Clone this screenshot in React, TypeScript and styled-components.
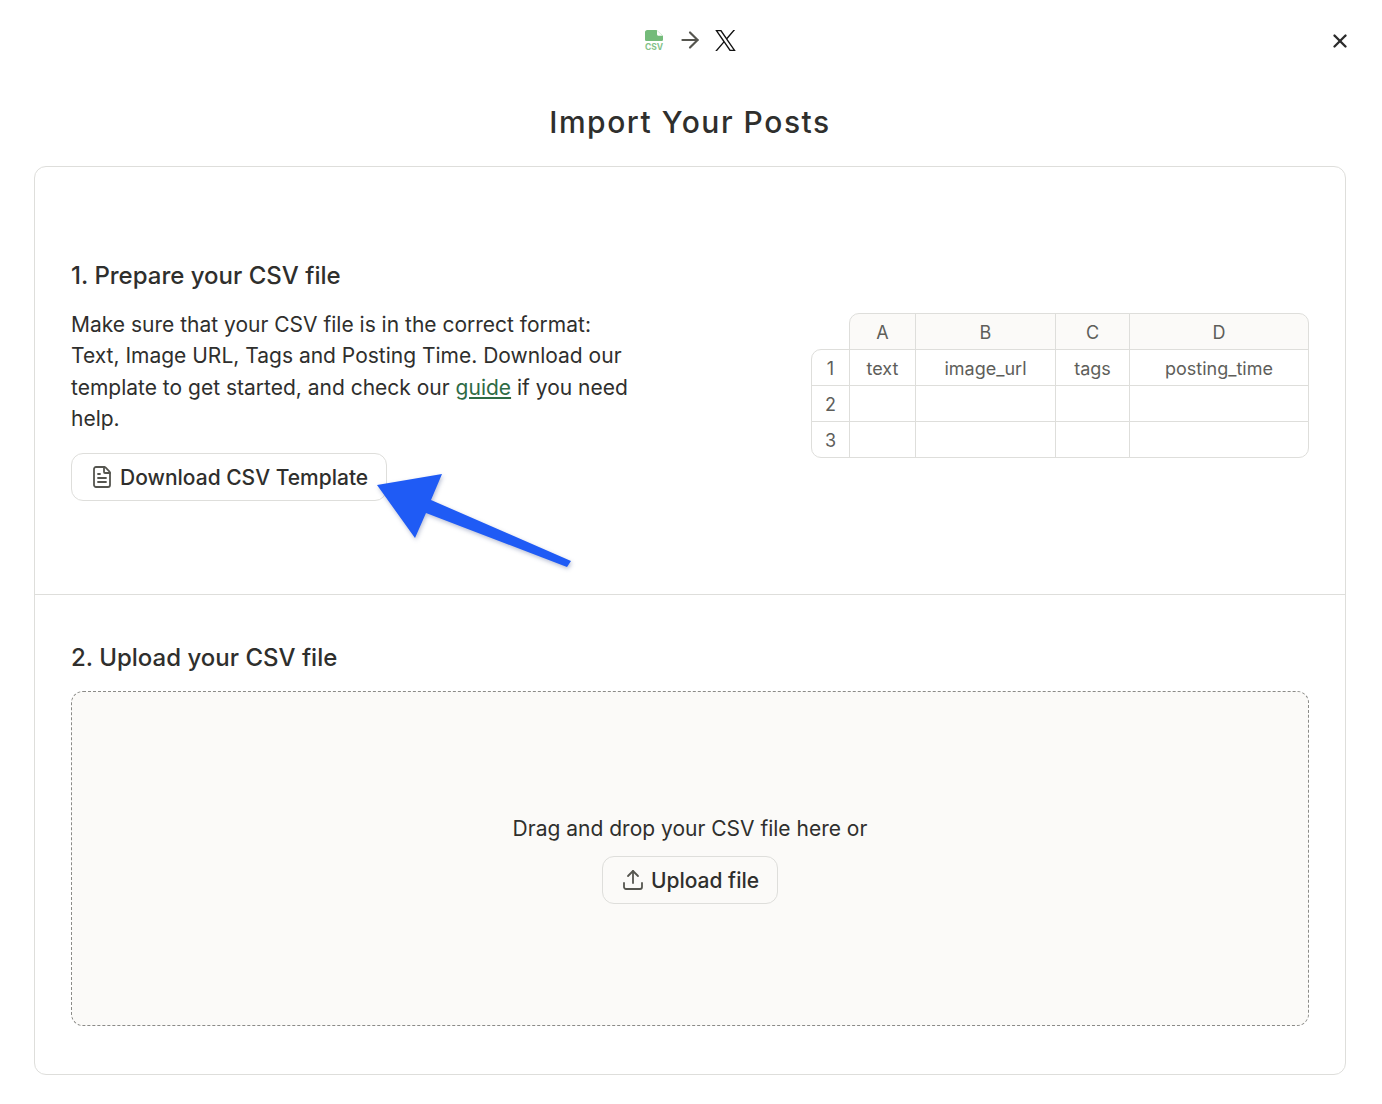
import React from 'react';
import styled, { createGlobalStyle } from 'styled-components';
import { FileText, Upload, ArrowRight, X } from 'lucide-react';

const GlobalStyle = createGlobalStyle`
  html, body {
    margin: 0;
    padding: 0;
    background: #fff;
  }
  body {
    font-family: Inter, "Liberation Sans", sans-serif;
    color: #2f2f2d;
  }
`;

const Page = styled.div`
  position: relative;
  width: 1382px;
  height: 1104px;
  padding: 0 36px 0 34px;
  box-sizing: border-box;
`;

const TopBar = styled.div`
  height: 80px;
  display: flex;
  align-items: center;
  justify-content: center;
  gap: 12.5px;
`;

const CloseButton = styled.button`
  position: absolute;
  top: 29px;
  right: 30px;
  width: 24px;
  height: 24px;
  padding: 0;
  border: 0;
  background: none;
  color: #2b2b2b;
  display: flex;
  align-items: center;
  justify-content: center;
`;

const Title = styled.h1`
  margin: 0;
  height: 86px;
  font-size: 30px;
  line-height: 85px;
  font-weight: 500;
  letter-spacing: 1.55px;
  text-align: center;
  color: #2f2f2d;
`;

const Card = styled.div`
  position: relative;
  height: 909px;
  border: 1px solid #dededb;
  border-radius: 12px;
  box-sizing: border-box;
  display: flex;
  flex-direction: column;
`;

const PrepareSection = styled.section`
  height: 428px;
  box-sizing: border-box;
  padding: 93px 36px 0;
  border-bottom: 1px solid #dededb;
  display: flex;
  justify-content: space-between;
  align-items: flex-start;
`;

const UploadSection = styled.section`
  flex: 1;
  padding: 47px 36px 48px;
  display: flex;
  flex-direction: column;
`;

const LeftColumn = styled.div`
  width: 570px;
`;

const Heading = styled.h2`
  margin: 0 0 17px;
  font-size: 24px;
  line-height: 32px;
  font-weight: 500;
  color: #2f2f2d;
`;

const Body = styled.p`
  margin: 1px 0 18.4px;
  font-size: 21px;
  line-height: 31.4px;
  color: #2f2f2d;
`;

const GuideLink = styled.a`
  color: #2f6b45;
  text-decoration: underline;
`;

const OutlineButton = styled.button`
  height: 48px;
  padding: 0 18px;
  box-sizing: border-box;
  display: inline-flex;
  align-items: center;
  gap: 6px;
  border: 1px solid #dededb;
  border-radius: 12px;
  background: transparent;
  font-family: inherit;
  font-size: 21px;
  font-weight: 500;
  color: #2f2f2d;

  svg {
    color: #55554f;
  }
`;

const SheetGrid = styled.div`
  margin-top: 53px;
  margin-right: 1px;
  display: grid;
  grid-template-columns: 38px 66px 140px 74px 179px;
  grid-auto-rows: 36px;
`;

const Cell = styled.div<{ $head?: boolean; $corner?: string }>`
  display: flex;
  align-items: center;
  justify-content: center;
  box-sizing: border-box;
  margin: 0 -1px -1px 0;
  padding-top: 2px;
  border: 1px solid #dededb;
  font-size: 18px;
  color: #5e5e5a;
  background: ${({ $head }) => ($head ? '#fbfaf8' : '#fff')};
  border-radius: ${({ $corner }) => $corner || '0'};
`;

const BlankCell = styled.div``;

const DropZone = styled.div`
  flex: 1;
  border: 1px dashed #8b8b88;
  border-radius: 12px;
  background: #fbfaf8;
  display: flex;
  flex-direction: column;
  align-items: center;
  justify-content: center;
  gap: 11px;
`;

const DropText = styled.div`
  font-size: 21px;
  line-height: 32px;
  color: #2f2f2d;
`;

const ArrowOverlay = styled.svg`
  position: absolute;
  left: 0;
  top: 0;
  pointer-events: none;
  filter: drop-shadow(1px 2px 2px rgba(20, 40, 110, 0.3));
`;

const CsvIcon = () => (
  <svg width="20" height="24" viewBox="0 0 20 24">
    <path d="M1 4C1 3 2 2 3.200 2H12.500L19 8V11.500C19 12.500 18.300 13 17.500 13H2.500C1.700 13 1 12.500 1 11.500z" fill="#74bb7a" />
    <path d="M13 2.500L18.500 7.800H14.500C13.600 7.800 13 7.200 13 6.300z" fill="#fff" />
    <text x="10" y="21.500" textAnchor="middle" fontSize="8.500" fontWeight="700" fill="#84c389" fontFamily="Inter, sans-serif">CSV</text>
  </svg>
);

const XLogo = () => (
  <svg width="21" height="21" viewBox="0 0 24 24" fill="#111">
    <path d="M14.234 10.162 22.977 0h-2.072l-7.591 8.824L7.251 0H.258l9.168 13.343L.258 24H2.330l8.016-9.318L16.749 24h6.993zm-2.837 3.299-.929-1.329L3.076 1.560h3.182l5.965 8.532.929 1.329 7.754 11.091h-3.182z" />
  </svg>
);

const rows = [
  { n: '1', values: ['text', 'image_url', 'tags', 'posting_time'] },
  { n: '2', values: ['', '', '', ''] },
  { n: '3', values: ['', '', '', ''] },
];

const Sheet = () => (
  <SheetGrid>
    <BlankCell />
    <Cell $head $corner="10px 0 0 0">A</Cell>
    <Cell $head>B</Cell>
    <Cell $head>C</Cell>
    <Cell $head $corner="0 10px 0 0">D</Cell>
    {rows.map((row, r) => (
      <React.Fragment key={row.n}>
        <Cell $corner={r === 0 ? '10px 0 0 0' : r === 2 ? '0 0 0 10px' : undefined}>{row.n}</Cell>
        {row.values.map((value, c) => (
          <Cell key={c} $corner={r === 2 && c === 3 ? '0 0 10px 0' : undefined}>{value}</Cell>
        ))}
      </React.Fragment>
    ))}
  </SheetGrid>
);

export default function App() {
  return (
    <Page>
      <GlobalStyle />
      <TopBar>
        <CsvIcon />
        <ArrowRight size={26} color="#55554f" strokeWidth={2} />
        <XLogo />
      </TopBar>
      <CloseButton aria-label="Close">
        <X size={22} strokeWidth={2.6} />
      </CloseButton>
      <Title>Import Your Posts</Title>
      <Card>
        <PrepareSection>
          <LeftColumn>
            <Heading>1. Prepare your CSV file</Heading>
            <Body>
              Make sure that your CSV file is in the correct format: Text, Image URL, Tags and
              Posting Time. Download our template to get started, and check our{' '}
              <GuideLink href="#">guide</GuideLink> if you need help.
            </Body>
            <OutlineButton>
              <FileText size={24} strokeWidth={1.8} />
              Download CSV Template
            </OutlineButton>
          </LeftColumn>
          <Sheet />
        </PrepareSection>
        <UploadSection>
          <Heading>2. Upload your CSV file</Heading>
          <DropZone>
            <DropText>Drag and drop your CSV file here or</DropText>
            <OutlineButton>
              <Upload size={24} strokeWidth={1.8} />
              Upload file
            </OutlineButton>
          </DropZone>
        </UploadSection>
      </Card>
      <ArrowOverlay width="1382" height="1104">
        <polygon points="377,485 442,474 431,500 571,561 567,567 426,513 415,538" fill="#1f5bf5" />
      </ArrowOverlay>
    </Page>
  );
}
